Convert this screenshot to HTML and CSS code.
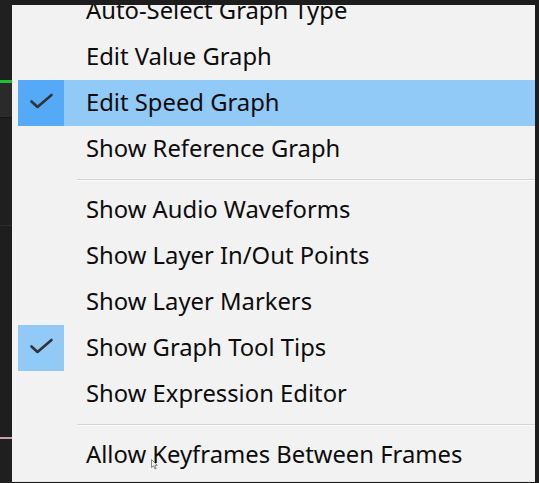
FILE: index.html
```html
<!DOCTYPE html>
<html>
<head>
<meta charset="utf-8">
<link rel="stylesheet" href="styles.css">
</head>
<body>
<div class="app">
  <div class="side">
    <div class="seg seg-top"></div>
    <div class="seg seg-green"></div>
    <div class="seg seg-a"></div>
    <div class="seg seg-b"></div>
    <div class="seg seg-c"></div>
    <div class="seg seg-pink"></div>
    <div class="seg seg-d"></div>
  </div>
</div>
<div class="menu">
  <ul class="list">
    <li class="item"><span class="chk"></span><span class="lbl">Auto-Select Graph Type</span></li>
    <li class="item"><span class="chk"></span><span class="lbl">Edit Value Graph</span></li>
    <li class="item hover checked"><span class="chk"><svg viewBox="0 0 46 46" width="46" height="46"><path d="M13.5 21.5 L19.5 27 L33.5 15" fill="none" stroke="#333" stroke-width="2.6" stroke-linecap="round" stroke-linejoin="round"/></svg></span><span class="lbl">Edit Speed Graph</span></li>
    <li class="item"><span class="chk"></span><span class="lbl">Show Reference Graph</span></li>
    <li class="sep"></li>
    <li class="item"><span class="chk"></span><span class="lbl">Show Audio Waveforms</span></li>
    <li class="item"><span class="chk"></span><span class="lbl">Show Layer In/Out Points</span></li>
    <li class="item"><span class="chk"></span><span class="lbl">Show Layer Markers</span></li>
    <li class="item checked"><span class="chk"><svg viewBox="0 0 46 46" width="46" height="46"><path d="M13.5 21.5 L19.5 27 L33.5 15" fill="none" stroke="#333" stroke-width="2.6" stroke-linecap="round" stroke-linejoin="round"/></svg></span><span class="lbl">Show Graph Tool Tips</span></li>
    <li class="item"><span class="chk"></span><span class="lbl">Show Expression Editor</span></li>
    <li class="sep"></li>
    <li class="item"><span class="chk"></span><span class="lbl">Allow Keyframes Between Frames</span></li>
  </ul>
</div>
<svg class="cursor" viewBox="0 0 7 11" width="7" height="11"><path d="M0.5 0.5 L0.5 8.5 L2.5 6.8 L4 10 L5.2 9.4 L3.8 6.3 L6.3 6.3 Z" fill="#f4f4f4" stroke="#6a6a6a" stroke-width="0.8" stroke-linejoin="round"/></svg>
</body>
</html>
```
FILE: styles.css
```css
html, body {
  margin: 0;
  padding: 0;
}
body {
  width: 539px;
  height: 483px;
  overflow: hidden;
  background: #1d1d1d;
  position: relative;
  font-family: "Noto Sans", "Open Sans", sans-serif;
}
.app {
  display: flex;
  height: 483px;
}
.side {
  width: 12px;
  display: flex;
  flex-direction: column;
}
.seg-top { height: 80px; background: #202020; }
.seg-green { height: 3px; background: #1ec42f; }
.seg-a { height: 34px; background: #2a2a2a; border-bottom: 1px solid #151515; }
.seg-b { height: 107px; background: #1f1f1f; border-bottom: 1px solid #2c2c2c; }
.seg-c { height: 211px; background: #1e1e1e; }
.seg-pink { height: 2px; background: #c7a0aa; }
.seg-d { flex: 1; background: #1f1f1f; }

.menu {
  position: absolute;
  left: 12px;
  top: 5px;
  width: 523px;
  height: 476px;
  background: #f2f2f2;
  overflow: hidden;
  border-bottom: 1px solid #e6e6e6;
}
.list {
  list-style: none;
  margin: -17px 0 0 0;
  padding: 0 0 0 6px;
}
.item {
  display: flex;
  align-items: center;
  height: 46px;
}
.chk {
  width: 46px;
  height: 46px;
  flex: none;
  display: flex;
}
.item.checked .chk { background: #91c9f7; }
.item.hover { background: #91c9f7; }
.item.hover .chk { background: #55aaf7; }
.lbl {
  padding-left: 22px;
  font-size: 23.8px;
  color: #0c0c0c;
  line-height: 46px;
  padding-bottom: 2px;
  white-space: nowrap;
}
.sep {
  height: 15px;
  display: flex;
  align-items: center;
  margin-left: 59px;
}
.sep::before {
  content: "";
  display: block;
  width: 100%;
  height: 1px;
  background: #d5d5d5;
  border-bottom: 1px solid #fbfbfb;
}
.cursor {
  position: absolute;
  left: 151px;
  top: 459px;
}
```
